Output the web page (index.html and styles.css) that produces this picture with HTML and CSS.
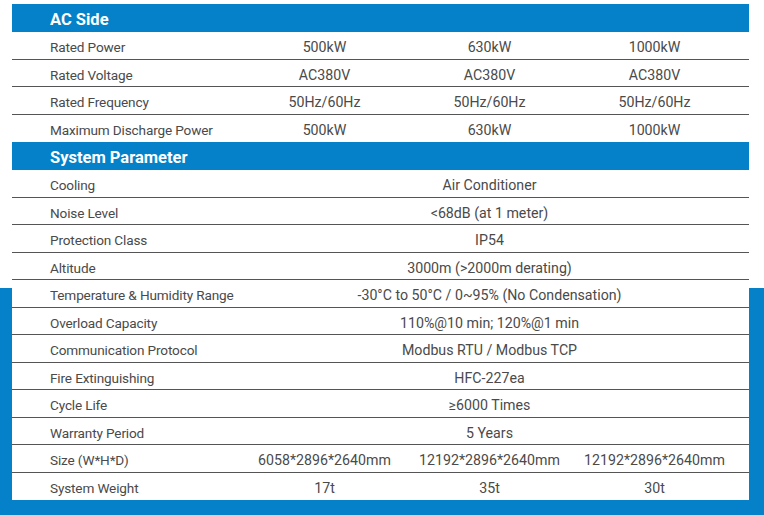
FILE: index.html
```html
<!DOCTYPE html>
<html>
<head>
<meta charset="utf-8">
<link rel="stylesheet" href="styles.css">
</head>
<body>
<div class="sheet">
  <div class="head">AC Side</div>
  <div class="row"><div class="lab">Rated Power</div><div class="v">500kW</div><div class="v">630kW</div><div class="v">1000kW</div></div>
  <div class="row"><div class="lab">Rated Voltage</div><div class="v">AC380V</div><div class="v">AC380V</div><div class="v">AC380V</div></div>
  <div class="row"><div class="lab">Rated Frequency</div><div class="v">50Hz/60Hz</div><div class="v">50Hz/60Hz</div><div class="v">50Hz/60Hz</div></div>
  <div class="row last"><div class="lab">Maximum Discharge Power</div><div class="v">500kW</div><div class="v">630kW</div><div class="v">1000kW</div></div>
  <div class="head">System Parameter</div>
  <div class="row"><div class="lab">Cooling</div><div class="v span">Air Conditioner</div></div>
  <div class="row"><div class="lab">Noise Level</div><div class="v span">&lt;68dB (at 1 meter)</div></div>
  <div class="row"><div class="lab">Protection Class</div><div class="v span">IP54</div></div>
  <div class="row"><div class="lab">Altitude</div><div class="v span">3000m (&gt;2000m derating)</div></div>
  <div class="row"><div class="lab">Temperature &amp; Humidity Range</div><div class="v span">-30°C to 50°C / 0~95% (No Condensation)</div></div>
  <div class="row"><div class="lab">Overload Capacity</div><div class="v span">110%@10 min; 120%@1 min</div></div>
  <div class="row"><div class="lab">Communication Protocol</div><div class="v span">Modbus RTU / Modbus TCP</div></div>
  <div class="row"><div class="lab">Fire Extinguishing</div><div class="v span">HFC-227ea</div></div>
  <div class="row"><div class="lab">Cycle Life</div><div class="v span">≥6000 Times</div></div>
  <div class="row"><div class="lab">Warranty Period</div><div class="v span">5 Years</div></div>
  <div class="row"><div class="lab">Size (W*H*D)</div><div class="v">6058*2896*2640mm</div><div class="v">12192*2896*2640mm</div><div class="v">12192*2896*2640mm</div></div>
  <div class="row last"><div class="lab">System Weight</div><div class="v">17t</div><div class="v">35t</div><div class="v">30t</div></div>
</div>
</body>
</html>
```
FILE: styles.css
```css
html, body {
  margin: 0;
  padding: 0;
}
body {
  width: 764px;
  height: 515px;
  overflow: hidden;
  background: linear-gradient(#ffffff 288px, #0481c9 288px);
  font-family: Roboto, "Liberation Sans", sans-serif;
}
.sheet {
  margin: 4px 0 0 12px;
  width: 737px;
  background: #ffffff;
}
.head {
  height: 28px;
  background: #0481c9;
  color: #ffffff;
  font-weight: 700;
  font-size: 16.5px;
  line-height: 31px;
  padding-left: 38px;
}
.row {
  display: grid;
  grid-template-columns: 230px 165px 165px 165px 12px;
  height: 27.5px;
  box-sizing: border-box;
  border-bottom: 1px solid #555555;
  color: #4a4a4a;
  line-height: 30px;
}
.row.last {
  border-bottom: none;
}
.lab {
  padding-left: 38px;
  white-space: nowrap;
  font-size: 13.6px;
  letter-spacing: -0.15px;
}
.v {
  text-align: center;
  white-space: nowrap;
  font-size: 14.2px;
}
.v.span {
  grid-column: 2 / span 3;
}
```
